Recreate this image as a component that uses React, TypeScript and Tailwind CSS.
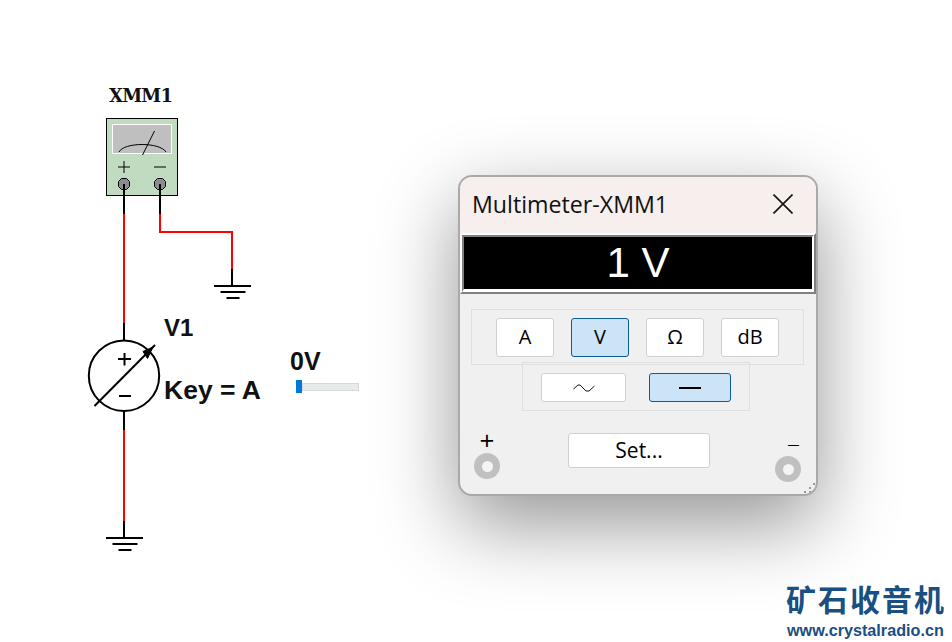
const winFont = { fontFamily: '"Open Sans", "Noto Sans", sans-serif' };

function Ground({ x, y }: { x: number; y: number }) {
  return (
    <g stroke="#000" strokeWidth="2">
      <path d={`M${x - 18.5} ${y}H${x + 18.5}`} />
      <path d={`M${x - 12} ${y + 6}H${x + 13}`} />
      <path d={`M${x - 6} ${y + 12}H${x + 7}`} />
    </g>
  );
}

function Circuit() {
  return (
    <svg className="absolute left-0 top-0" width="460" height="642" viewBox="0 0 460 642" fill="none">
      {/* wires */}
      <path d="M124 214V323" stroke="#f00" strokeWidth="2" />
      <path d="M160 214V232H232V269" stroke="#f00" strokeWidth="2" />
      <path d="M124 430V521" stroke="#f00" strokeWidth="2" />
      <path d="M124 184V214M160 184V214M232 269V285M124 323V340M124 411V430M124 521V537" stroke="#000" strokeWidth="2" />
      <Ground x={232.5} y={286} />
      <Ground x={124.5} y={538} />

      {/* multimeter */}
      <rect x="106.5" y="118.5" width="71" height="77" fill="#c1dbc0" stroke="#000" />
      <rect x="112.5" y="124.5" width="59" height="29" fill="#bfbfbf" stroke="#fff" />
      <path d="M119 152C124 142 160 142 166 152" stroke="#000" />
      <path d="M142.5 155L154.5 131" stroke="#000" />
      <path d="M118 167H130M124 161V173M154 167H166" stroke="#000" />
      <path d="M121.5 178.5H126.5L129.5 181.5V186.5L126.5 189.5H121.5L118.5 186.5V181.5Z" fill="#8c8c90" stroke="#000" />
      <path d="M157.5 178.5H162.5L165.5 181.5V186.5L162.5 189.5H157.5L154.5 186.5V181.5Z" fill="#8c8c90" stroke="#000" />
      <path d="M124 184V196M160 184V196" stroke="#000" strokeWidth="2" />

      {/* source */}
      <circle cx="124" cy="375.7" r="35.2" fill="#fff" stroke="#000" strokeWidth="2" />
      <path d="M118 359H131M124.5 353V365.5M119 396H131" stroke="#000" strokeWidth="2" />
      <path d="M94.5 406L155 345" stroke="#000" strokeWidth="2" />
      <path d="M153 347L143 351.5L147.5 358.5Z" fill="#000" stroke="#000" />
    </svg>
  );
}

function Btn({ children, active, className }: { children: React.ReactNode; active?: boolean; className: string }) {
  return (
    <button
      type="button"
      className={`flex items-center justify-center rounded-[3px] border text-[20px] leading-none text-black ${
        active ? 'border-[#0f5a9c] bg-[#cce4f7]' : 'border-[#d0d0d0] bg-white'
      } ${className}`}
    >
      {children}
    </button>
  );
}

function Terminal() {
  return (
    <span className="flex h-[26px] w-[26px] items-center justify-center rounded-full bg-[#c0c0c0]">
      <span className="h-[11px] w-[11px] rounded-full bg-[#f4f4f4]" />
    </span>
  );
}

export default function App() {
  return (
    <div className="relative h-[642px] w-[952px] overflow-hidden bg-white">
      <Circuit />

      <div
        className="absolute left-[109px] top-[84px] text-[18px] font-bold leading-6 tracking-[-0.8px] text-[#111]"
        style={{ fontFamily: '"DejaVu Serif", serif' }}
      >
        XMM1
      </div>
      <div className="absolute left-[164px] top-[314px] font-['Liberation_Sans',sans-serif] text-[24px] font-bold leading-7 text-[#111]">
        V1
      </div>
      <div className="absolute left-[164px] top-[376px] font-['Liberation_Sans',sans-serif] text-[26.5px] font-bold leading-7 text-[#111]">
        Key = A
      </div>
      <div className="absolute left-[290px] top-[347px] font-['Liberation_Sans',sans-serif] text-[25px] font-bold leading-7 text-[#111]">
        0V
      </div>

      {/* slider */}
      <div className="absolute left-[296px] top-[380px] flex h-[13px] w-[63px] items-center">
        <span className="h-[13px] w-[6px] bg-[#0078d7]" />
        <span className="h-[8px] flex-1 border border-[#d6d9d9] bg-[#e7eaea]" />
      </div>

      {/* multimeter window */}
      <div
        className="absolute left-[458px] top-[175px] flex h-[321px] w-[360px] flex-col overflow-hidden rounded-[14px] border-2 border-[#a9a9a9] bg-[#f0f0f0] shadow-[0_28px_80px_rgba(0,0,0,0.42)]"
        style={winFont}
      >
        <div className="flex h-[56px] shrink-0 items-center justify-between bg-[#f6efed] pl-[12px] pr-[23px]">
          <span className="text-[23.2px] leading-none text-[#111]">Multimeter-XMM1</span>
          <svg className="mb-[3px]" width="20" height="20" viewBox="0 0 20 20" fill="none" stroke="#111" strokeWidth="1.6">
            <path d="M0.5 0.5L19.5 19.5M19.5 0.5L0.5 19.5" />
          </svg>
        </div>

        <div className="h-[61px] shrink-0 border-2 border-b-2 border-white border-r-[#808080] border-b-[#808080]">
          <div className="flex h-full items-center justify-center border-2 border-b-[3px] border-[#808080] border-r-white border-b-white bg-black">
            <span className="font-['Liberation_Sans',sans-serif] text-[42px] leading-none text-white">1 V</span>
          </div>
        </div>

        <div className="ml-[11px] mt-[15px] flex h-[56px] w-[333px] shrink-0 items-center justify-center gap-[17px] border border-[#dfdfdf]">
          <Btn className="h-[39px] w-[58px]">A</Btn>
          <Btn active className="h-[39px] w-[58px]">V</Btn>
          <Btn className="h-[39px] w-[58px]">Ω</Btn>
          <Btn className="h-[39px] w-[58px]">dB</Btn>
        </div>

        <div className="ml-[62px] mt-[-3px] flex h-[49px] w-[228px] shrink-0 items-start gap-[23px] border border-[#dfdfdf] pl-[18px] pt-[10px]">
          <Btn className="h-[29px] w-[85px]">
            <svg width="22" height="8" viewBox="0 0 22 8" fill="none" stroke="#111">
              <path d="M0.5 5L5 1H7L13 7H16L21.5 2" />
            </svg>
          </Btn>
          <Btn active className="h-[29px] w-[82px]">
            <span className="h-[2px] w-[22px] bg-black" />
          </Btn>
        </div>

        <div className="flex h-[75px] items-start pl-[14px] pr-[15px]">
          <div className="mt-[17px] flex w-[26px] flex-col items-center">
            <span className="h-[25px] text-[26px] leading-[24px] text-black">+</span>
            <Terminal />
          </div>
          <Btn className="ml-[68px] mt-[22px] h-[35px] w-[142px] text-[21px]">Set...</Btn>
          <div className="ml-[65px] mt-[21px] flex w-[26px] flex-col items-center">
            <span className="ml-[11px] h-[24px] pt-[1px] text-[12px] leading-[24px] text-black">—</span>
            <Terminal />
          </div>
        </div>

        {/* resize grip */}
        <svg className="absolute bottom-0 right-0" width="14" height="14" viewBox="0 0 14 14" fill="#9a9a9a">
          <rect x="7" y="7" width="2" height="2" />
          <rect x="11" y="3" width="2" height="2" />
          <rect x="7" y="11" width="2" height="2" />
          <rect x="2" y="11" width="2" height="2" />
        </svg>
      </div>

      {/* logo */}
      <div className="absolute left-[786px] top-[579px] flex w-[166px] flex-col">
        <span
          className="whitespace-nowrap text-[30px] font-bold leading-[38px] tracking-[2px] text-[#1a4f82]"
          style={{ fontFamily: '"Noto Sans CJK SC", sans-serif' }}
        >
          矿石收音机
        </span>
        <span className="mt-[3px] whitespace-nowrap pl-[1px] font-['Liberation_Sans',sans-serif] text-[16.2px] font-bold leading-[20px] text-[#1a4f82]">
          www.crystalradio.cn
        </span>
      </div>
    </div>
  );
}
